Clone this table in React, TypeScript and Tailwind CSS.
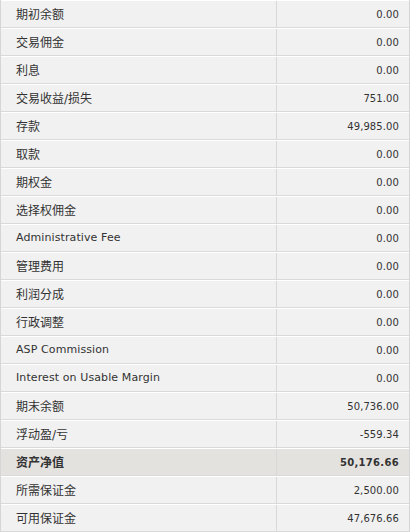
const rows: { label: string; value: string; total?: boolean }[] = [
  { label: '期初余额', value: '0.00' },
  { label: '交易佣金', value: '0.00' },
  { label: '利息', value: '0.00' },
  { label: '交易收益/损失', value: '751.00' },
  { label: '存款', value: '49,985.00' },
  { label: '取款', value: '0.00' },
  { label: '期权金', value: '0.00' },
  { label: '选择权佣金', value: '0.00' },
  { label: 'Administrative Fee', value: '0.00' },
  { label: '管理费用', value: '0.00' },
  { label: '利润分成', value: '0.00' },
  { label: '行政调整', value: '0.00' },
  { label: 'ASP Commission', value: '0.00' },
  { label: 'Interest on Usable Margin', value: '0.00' },
  { label: '期末余额', value: '50,736.00' },
  { label: '浮动盈/亏', value: '-559.34' },
  { label: '资产净值', value: '50,176.66', total: true },
  { label: '所需保证金', value: '2,500.00' },
  { label: '可用保证金', value: '47,676.66' },
];

const isLatin = (s: string) => /^[\x00-\x7f]+$/.test(s);

export default function App() {
  return (
    <div
      className="w-[410px] bg-white text-[#333]"
      style={{ fontFamily: '"DejaVu Sans", "Noto Sans CJK SC", sans-serif' }}
    >
      <div className="border-l border-r border-[#d6d6d6]">
        {rows.map((row) => (
          <div
            key={row.label}
            className={`grid grid-cols-[276px_1fr] h-[28px] border-t border-white border-b border-b-[#dadada] ${
              row.total ? 'bg-[#e4e2df] font-bold' : 'bg-[#f1f1f1]'
            }`}
          >
            <div
              className={`flex items-center pl-[15px] pt-px border-r border-[#d8d8d8] ${
                isLatin(row.label) ? 'text-[11px] tracking-[0.1px]' : 'text-[12px]'
              }`}
            >
              {row.label}
            </div>
            <div
              className={`flex items-center justify-end pr-[10px] pt-px text-[10px] ${
                row.total ? 'tracking-[0.3px]' : 'tracking-[0.1px]'
              }`}
            >
              {row.value}
            </div>
          </div>
        ))}
      </div>
    </div>
  );
}
